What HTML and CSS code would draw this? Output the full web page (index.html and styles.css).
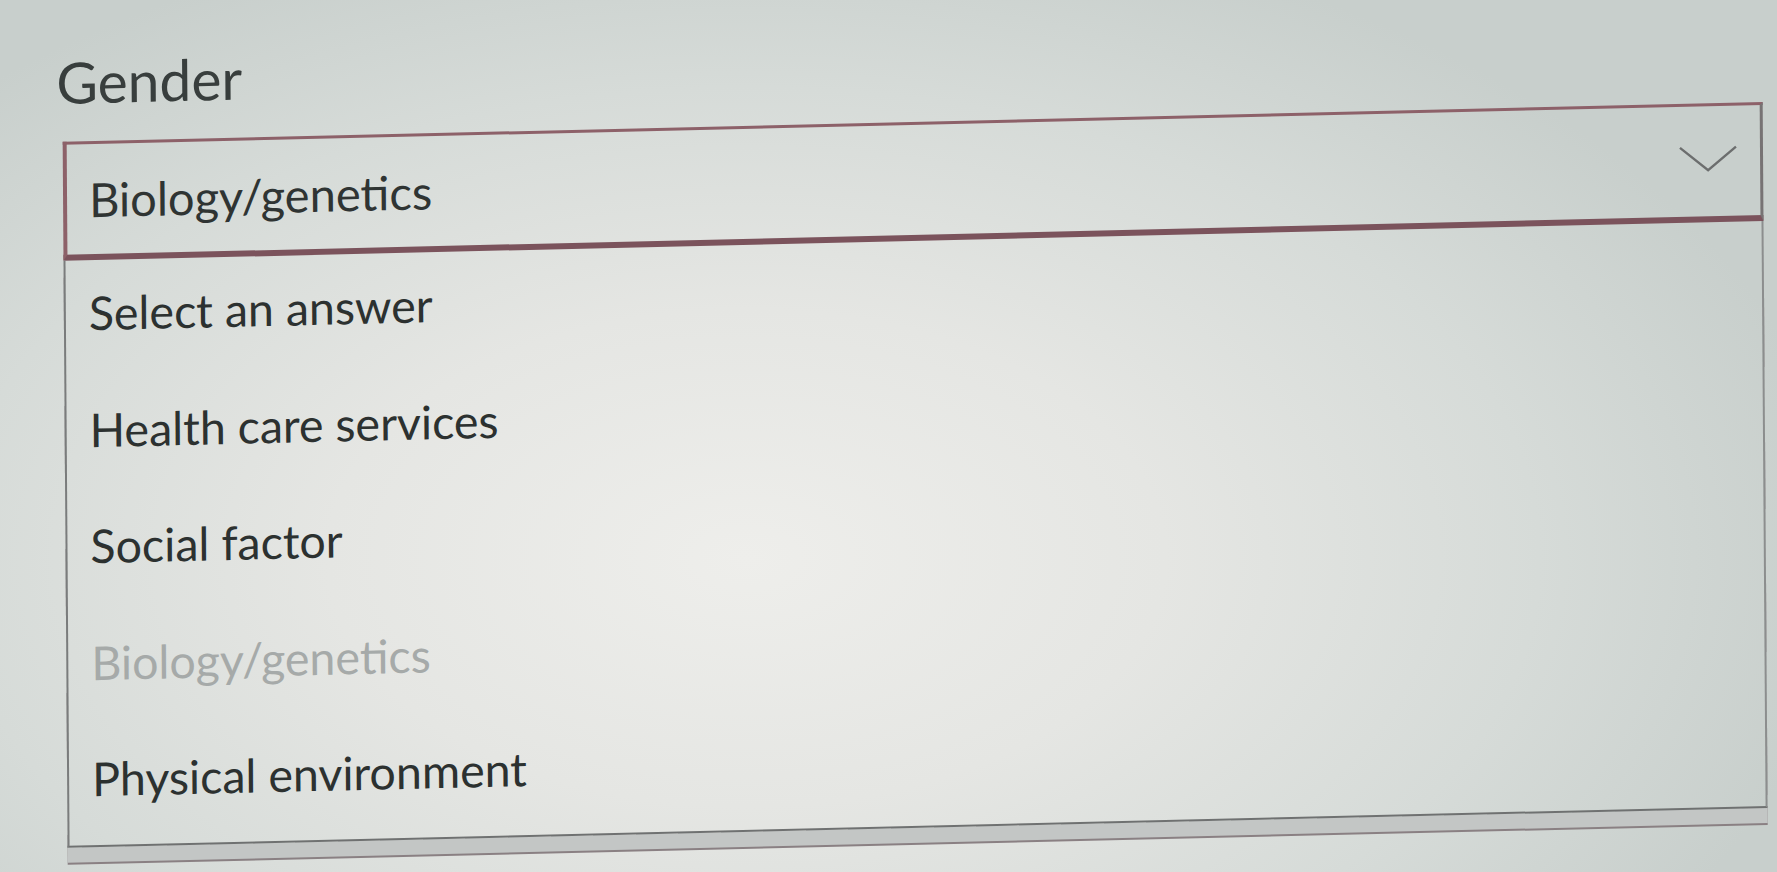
FILE: index.html
```html
<!DOCTYPE html>
<html lang="en">
<head>
<meta charset="utf-8">
<title>Gender</title>
<link rel="stylesheet" href="styles.css">
</head>
<body>
  <div class="field">
    <div class="label">Gender</div>
    <div class="select">
      <span class="value">Biology/genetics</span>
      <svg class="chevron" width="60" height="28" viewBox="0 0 60 28" aria-hidden="true">
        <polyline points="2,3 30,26 58,3" fill="none" stroke="#6c6e6e" stroke-width="2.4" stroke-linejoin="miter"/>
      </svg>
    </div>
    <ul class="listbox">
      <li class="option">Select an answer</li>
      <li class="option">Health care services</li>
      <li class="option">Social factor</li>
      <li class="option is-selected">Biology/genetics</li>
      <li class="option">Physical environment</li>
    </ul>
  </div>
</body>
</html>
```
FILE: styles.css
```css
html, body {
  margin: 0;
  height: 100%;
  overflow: hidden;
}

body {
  font-family: Lato, "Open Sans", sans-serif;
  background:
    radial-gradient(ellipse 62% 75% at 42% 64%, #eeeeeb 0%, #e5e6e3 38%, #d6dbd8 72%, #c8cfcc 100%);
}

.field {
  margin: 48px 0 0 56px;
  width: 1712px;
  transform: matrix(1, -0.0235, 0.007, 1, 0, 0);
  transform-origin: 0 0;
}

.label {
  font-size: 57px;
  line-height: 68px;
  color: #383e3d;
}

.select {
  margin: 26px 0 0 6px;
  width: 1700px;
  height: 119px;
  box-sizing: border-box;
  border: 3px solid #8d6169;
  border-left-width: 4px;
  border-right-color: #777374;
  border-bottom: 6px solid #7b535c;
  display: flex;
  align-items: center;
  justify-content: space-between;
  padding: 0 22px 0 22px;
}

.value {
  font-size: 47px;
  line-height: 56px;
  color: #2f3433;
}

.chevron {
  display: block;
  flex: none;
  margin-top: -6px;
}

.listbox {
  margin: 0 0 0 6px;
  padding: 0 0 2px;
  list-style: none;
  width: 1700px;
  box-sizing: border-box;
  border-left: 2px solid #7a7c7c;
  border-right: 2px solid #8c8e8e;
  border-bottom: 2px solid #6f7171;
  box-shadow: 0 15px 0 #c3c6c5, 0 17px 0 #8a8083;
}

.option {
  font-size: 46.5px;
  line-height: 104.5px;
  padding: 0 0 12px 23px;
  color: #2c3130;
}

.option.is-selected {
  color: #a6aaa9;
}
```
